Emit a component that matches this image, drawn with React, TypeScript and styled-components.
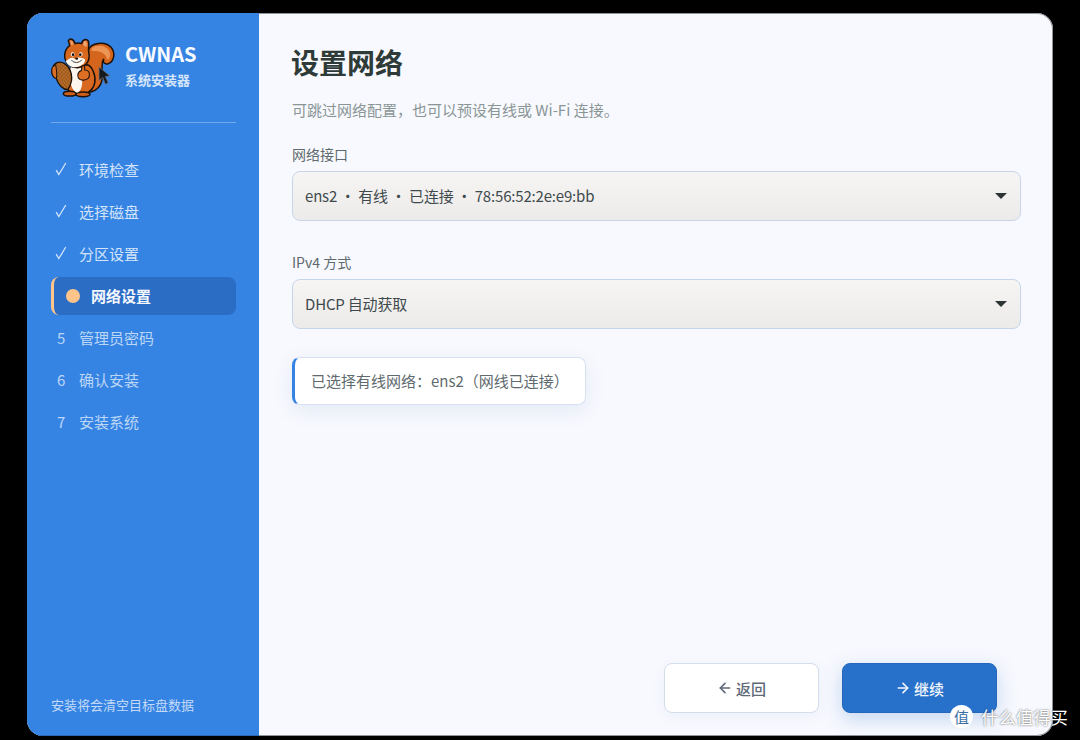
import React from 'react';
import styled, { createGlobalStyle } from 'styled-components';
import { ArrowLeft, ArrowRight } from 'lucide-react';

const FONT = `"Noto Sans CJK SC", "Noto Sans", sans-serif`;

const GlobalStyle = createGlobalStyle`
    html, body {
        margin: 0;
        height: 100%;
        background: #000;
    }
    body {
        font-family: ${FONT};
        overflow: hidden;
    }
`;

const STEPS = [
    { mark: '✓', label: '环境检查', state: 'done' },
    { mark: '✓', label: '选择磁盘', state: 'done' },
    { mark: '✓', label: '分区设置', state: 'done' },
    { mark: '', label: '网络设置', state: 'active' },
    { mark: '5', label: '管理员密码', state: 'todo' },
    { mark: '6', label: '确认安装', state: 'todo' },
    { mark: '7', label: '安装系统', state: 'todo' },
];

const CheckMark = () => (
    <CheckSvg viewBox="0 0 12 14" aria-hidden="true">
        <path d="M1.2 8.2L3.8 12.6L10.8 1" fill="none" stroke="currentColor" strokeWidth="1.3" />
    </CheckSvg>
);

const SquirrelLogo = () => (
    <LogoSvg viewBox="36 30 204 180" aria-hidden="true">
        <defs>
            <pattern id="cone" width="8" height="8" patternUnits="userSpaceOnUse" patternTransform="rotate(40)">
                <rect width="8" height="8" fill="#b96d28" />
                <path d="M0 0H8M0 0V8" stroke="#74420f" strokeWidth="1.8" />
            </pattern>
        </defs>
        <g stroke="#1c120a" strokeWidth="4.5" strokeLinejoin="round">
            <path
                d="M148 66C156 44 198 38 216 58C230 74 226 100 208 107C197 110 190 103 194 94C186 100 190 122 190 142C190 168 178 188 150 193L136 112Z"
                fill="#d5641d"
            />
            <path d="M86 122C72 150 78 195 110 200C136 205 162 190 167 165C172 140 158 114 145 110Z" fill="#d8671f" />
            <ellipse cx="92" cy="197" rx="19" ry="7" fill="#cf5f1b" />
            <ellipse cx="132" cy="199" rx="21" ry="7" fill="#cf5f1b" />
        </g>
        <path d="M158 60C176 48 200 52 210 68C216 78 213 90 205 96C204 80 184 64 158 70Z" fill="#ec9555" />
        <path d="M96 116C88 140 92 184 114 194C128 190 131 170 129 150C127 135 130 122 133 112Z" fill="#fbf7ef" />
        <path
            d="M78 92C74 72 84 58 92 53L88 38C93 30 104 32 108 47C115 44 122 44 128 47C130 34 142 31 148 39C152 50 147 60 149 72C154 94 147 116 115 119C93 119 82 108 78 92Z"
            fill="#d9681f"
            stroke="#1c120a"
            strokeWidth="4.5"
            strokeLinejoin="round"
        />
        <path d="M94 39L97 52L103 49C102 43 99 37 94 39ZM135 40L132 50L142 57C146 48 142 36 135 40Z" fill="#efa677" />
        <path
            d="M80 99C90 92 100 84 107 93C114 86 128 88 138 94C140 107 124 118 108 118C94 118 85 110 80 99Z"
            fill="#fdfaf3"
        />
        <ellipse cx="101" cy="79" rx="5.5" ry="6.5" fill="#fff" />
        <ellipse cx="125" cy="79" rx="5.5" ry="6.5" fill="#fff" />
        <circle cx="102" cy="80" r="4" fill="#17100a" />
        <circle cx="124" cy="80" r="4" fill="#17100a" />
        <ellipse cx="113" cy="92" rx="4.5" ry="3.2" fill="#17100a" />
        <path d="M98 97C105 106 120 106 128 96" fill="none" stroke="#17100a" strokeWidth="2.4" strokeLinecap="round" />
        <path
            d="M118 150C114 140 118 130 127 128L129 114C134 110 138 114 137 126C147 126 153 132 151 144C149 157 125 161 118 150Z"
            fill="#dd6f25"
            stroke="#1c120a"
            strokeWidth="3.4"
            strokeLinejoin="round"
        />
        <path
            d="M54 104C70 98 86 110 94 128C101 146 99 170 86 185C72 185 58 170 52 152C44 150 37 140 39 126C41 114 46 108 54 104Z"
            fill="url(#cone)"
            stroke="#1c120a"
            strokeWidth="4"
            strokeLinejoin="round"
        />
        <path d="M40 118C36 132 40 148 52 152C55 142 52 124 50 110Z" fill="#dd6f25" stroke="#1c120a" strokeWidth="3" />
    </LogoSvg>
);

const Watermark = () => (
    <WatermarkBox>
        <WatermarkBadge>值</WatermarkBadge>
        <WatermarkText>什么值得买</WatermarkText>
    </WatermarkBox>
);

const App = () => {
    return (
        <>
            <GlobalStyle />
            <Page>
                <InstallerWindow>
                    <Sidebar>
                        <Brand>
                            <SquirrelLogo />
                            <BrandText>
                                <BrandName>CWNAS</BrandName>
                                <BrandSub>系统安装器</BrandSub>
                            </BrandText>
                        </Brand>
                        <Divider />
                        <StepList>
                            {STEPS.map((step) => (
                                <StepItem key={step.label} $state={step.state}>
                                    <StepMark $state={step.state}>
                                        {step.state === 'active' ? (
                                            <ActiveDot />
                                        ) : step.state === 'done' ? (
                                            <CheckMark />
                                        ) : (
                                            step.mark
                                        )}
                                    </StepMark>
                                    {step.label}
                                </StepItem>
                            ))}
                        </StepList>
                        <SidebarNote>安装将会清空目标盘数据</SidebarNote>
                    </Sidebar>
                    <Content>
                        <Title>设置网络</Title>
                        <Subtitle>可跳过网络配置，也可以预设有线或 Wi-Fi 连接。</Subtitle>
                        <Field>
                            <FieldLabel>网络接口</FieldLabel>
                            <SelectBox>
                                <SelectValue>ens2 ・ 有线 ・ 已连接 ・ 78:56:52:2e:e9:bb</SelectValue>
                                <Caret />
                            </SelectBox>
                        </Field>
                        <Field>
                            <FieldLabel>IPv4 方式</FieldLabel>
                            <SelectBox>
                                <SelectValue>DHCP 自动获取</SelectValue>
                                <Caret />
                            </SelectBox>
                        </Field>
                        <Notice>已选择有线网络：ens2（网线已连接）</Notice>
                        <Actions>
                            <ActionButton>
                                <ArrowLeft size={16} strokeWidth={2.4} />
                                返回
                            </ActionButton>
                            <ActionButton $primary>
                                <ArrowRight size={16} strokeWidth={2.4} />
                                继续
                            </ActionButton>
                        </Actions>
                    </Content>
                    <Pointer viewBox="0 0 14 22" aria-hidden="true">
                        <path d="M1 1L1 16L5 12.5L8 20L11 18.5L8 11.5L13 11Z" fill="#15181c" stroke="#6d7480" strokeWidth="0.8" />
                    </Pointer>
                </InstallerWindow>
                <Watermark />
            </Page>
        </>
    );
};

const Page = styled.div`
    position: relative;
    width: 1080px;
    height: 740px;
    padding: 13px 27px 4px;
    box-sizing: border-box;
    background: #000;
`;

const InstallerWindow = styled.div`
    position: relative;
    display: flex;
    height: 100%;
    border-radius: 16px;
    overflow: hidden;
    background: #f8f9fe;
    box-shadow: inset 0 0 0 1px #8f939a;
`;

const Sidebar = styled.aside`
    display: flex;
    flex-direction: column;
    flex: 0 0 232px;
    box-sizing: border-box;
    padding: 25px 23px 22px 24px;
    background: #3584e4;
    box-shadow: inset 0 -1px 0 #2a68b5;
`;

const Brand = styled.div`
    display: flex;
    align-items: center;
    gap: 6px;
    height: 60px;
`;

const LogoSvg = styled.svg`
    flex: none;
    width: 68px;
    height: 60px;
`;

const BrandText = styled.div`
    display: flex;
    flex-direction: column;
    gap: 4px;
    margin-top: -6px;
`;

const BrandName = styled.div`
    color: #f7faff;
    font-size: 20px;
    font-weight: 700;
    line-height: 26px;
`;

const BrandSub = styled.div`
    color: #d5e5fa;
    font-size: 13px;
    font-weight: 700;
    line-height: 18px;
`;

const Divider = styled.div`
    height: 1px;
    margin-top: 24px;
    background: rgba(255, 255, 255, 0.3);
`;

const StepList = styled.nav`
    display: flex;
    flex-direction: column;
    gap: 4px;
    margin-top: 28px;
`;

const StepItem = styled.div<{ $state: string }>`
    display: flex;
    align-items: center;
    height: 38px;
    box-sizing: border-box;
    padding-bottom: 2px;
    font-size: 15px;
    color: ${({ $state }) =>
        $state === 'active' ? '#f4f8fe' : $state === 'done' ? '#d3e3f9' : '#bcd6f5'};
    font-weight: ${({ $state }) => ($state === 'active' ? 700 : 400)};
    ${({ $state }) =>
        $state === 'active' &&
        `
        background: #2b6cc4;
        border-left: 3px solid #ffc48a;
        border-radius: 8px;
    `}
`;

const StepMark = styled.span<{ $state: string }>`
    display: flex;
    align-items: center;
    flex: none;
    box-sizing: border-box;
    width: ${({ $state }) => ($state === 'active' ? '37px' : '28px')};
    padding-left: ${({ $state }) => ($state === 'active' ? '12px' : '6px')};
    font-size: 15px;
    font-weight: 400;
`;

const CheckSvg = styled.svg`
    display: block;
    width: 12px;
    height: 14px;
    margin-left: -2px;
`;

const ActiveDot = styled.i`
    display: block;
    width: 14px;
    height: 14px;
    margin-top: 2px;
    border-radius: 50%;
    background: #ffc48a;
`;

const SidebarNote = styled.div`
    margin-top: auto;
    color: #c4daf6;
    font-size: 13px;
    line-height: 18px;
`;

const Content = styled.main`
    display: flex;
    flex-direction: column;
    flex: 1;
    min-width: 0;
    box-sizing: border-box;
    padding: 28px 32px 23px 33px;
`;

const Title = styled.h1`
    margin: 0 0 0 -1px;
    color: #2e3b38;
    font-size: 28px;
    font-weight: 700;
    line-height: 42px;
`;

const Subtitle = styled.p`
    margin: 17px 0 0;
    color: #8a9696;
    font-size: 15px;
    line-height: 20px;
`;

const Field = styled.div`
    margin-top: 24px;
    & + & {
        margin-top: 31px;
    }
`;

const FieldLabel = styled.div`
    margin-bottom: 7px;
    color: #5e6a6d;
    font-size: 14px;
    line-height: 20px;
`;

const SelectBox = styled.div`
    display: flex;
    align-items: center;
    justify-content: space-between;
    height: 50px;
    box-sizing: border-box;
    padding: 0 13px 0 12px;
    color: #3f4a4d;
    font-size: 15px;
    letter-spacing: -0.18px;
    background: linear-gradient(#f6f5f4, #edebe9);
    border: 1px solid #c6d6ea;
    border-radius: 8px;
`;

const SelectValue = styled.span`
    padding-bottom: 2px;
`;

const Caret = styled.i`
    width: 0;
    height: 0;
    border-left: 6px solid transparent;
    border-right: 6px solid transparent;
    border-top: 6px solid #2e3436;
`;

const Notice = styled.div`
    align-self: flex-start;
    margin-top: 28px;
    height: 48px;
    box-sizing: border-box;
    padding: 0 16px 0 16px;
    color: #5e6a6d;
    font-size: 15px;
    line-height: 46px;
    background: #fff;
    border: 1px solid #d6e2f2;
    border-left: 3px solid #3584e4;
    border-radius: 8px;
    box-shadow: 0 6px 20px rgba(53, 100, 170, 0.1);
`;

const Actions = styled.div`
    display: flex;
    justify-content: flex-end;
    gap: 23px;
    margin-top: auto;
    padding-right: 24px;
`;

const ActionButton = styled.button<{ $primary?: boolean }>`
    display: flex;
    align-items: center;
    justify-content: center;
    gap: 3px;
    width: 155px;
    height: 50px;
    padding: 0;
    font-family: ${FONT};
    font-size: 15px;
    font-weight: 500;
    color: ${({ $primary }) => ($primary ? '#f1f6fd' : '#5e6a78')};
    background: ${({ $primary }) => ($primary ? '#2871cb' : '#fff')};
    border: 1px solid ${({ $primary }) => ($primary ? '#2567ba' : '#d3deeb')};
    border-radius: 8px;
    box-shadow: ${({ $primary }) =>
        $primary ? '0 6px 20px rgba(40, 113, 203, 0.25)' : '0 4px 14px rgba(53, 100, 170, 0.06)'};
`;

const Pointer = styled.svg`
    position: absolute;
    left: 71px;
    top: 53px;
    width: 13px;
    height: 20px;
`;

const WatermarkBox = styled.div`
    position: absolute;
    right: 12px;
    bottom: 12px;
    display: flex;
    align-items: center;
    gap: 8px;
`;

const WatermarkBadge = styled.span`
    display: flex;
    align-items: center;
    justify-content: center;
    width: 23px;
    height: 23px;
    color: #3a6ea5;
    font-size: 15px;
    background: #fff;
    border-radius: 50%;
`;

const WatermarkText = styled.span`
    color: #fff;
    font-size: 17.4px;
    line-height: 23px;
    text-shadow: 0 0 2px rgba(0, 0, 0, 0.7);
`;

export default App;
